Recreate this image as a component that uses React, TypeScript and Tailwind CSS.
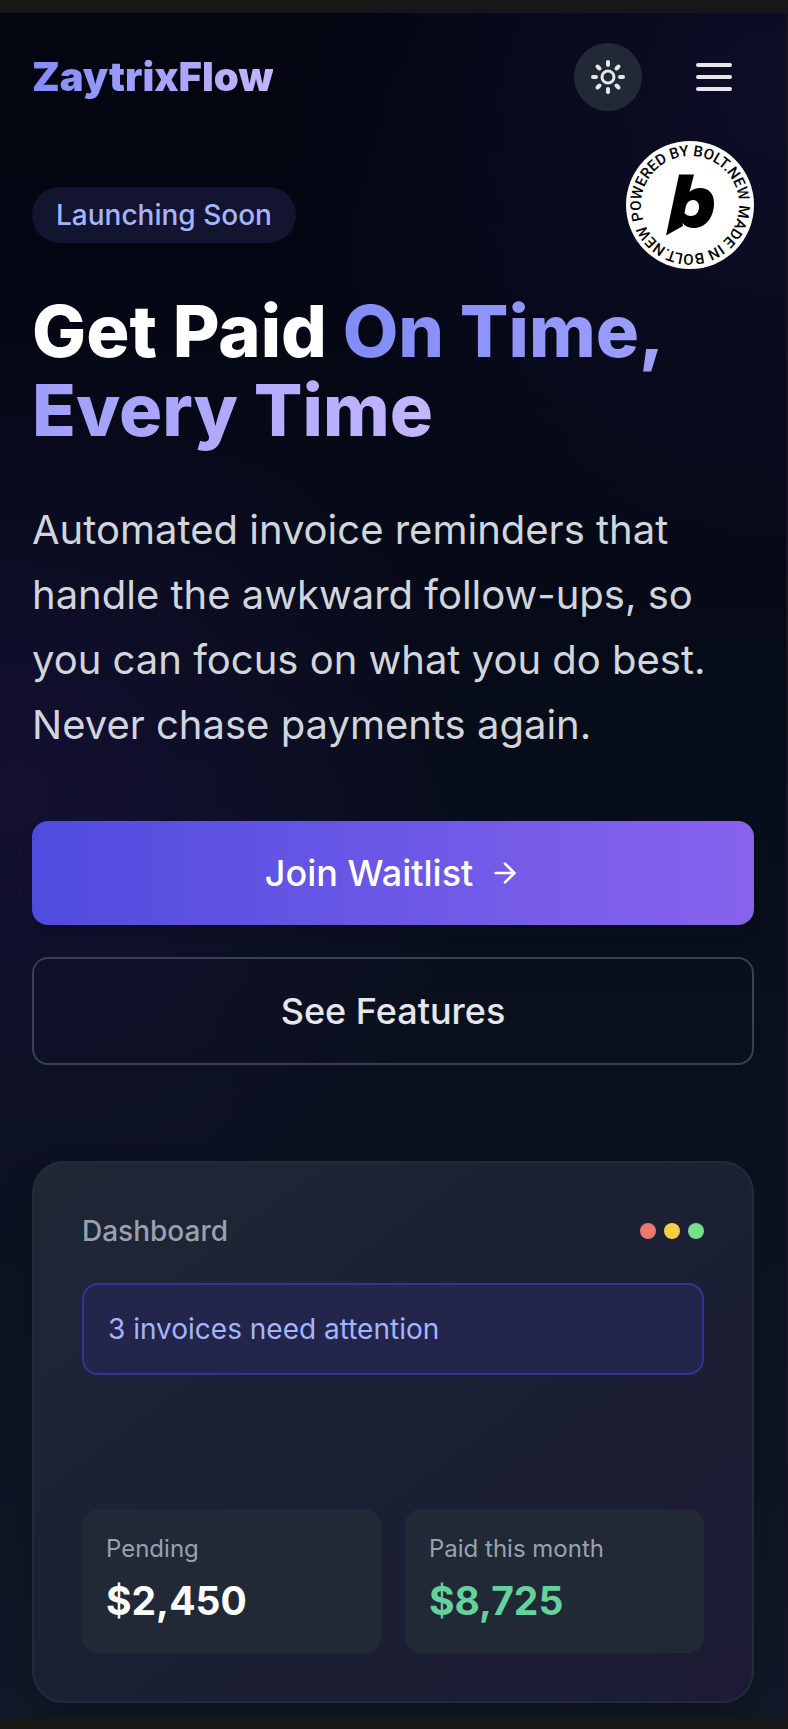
import React from 'react';
import { ArrowRight } from 'lucide-react';

const BoltBadge: React.FC = () => (
  <svg className="w-32 h-32" viewBox="0 0 128 128" role="img" aria-label="Powered by Bolt.new">
    <defs>
      <path id="badge-ring" d="M64 64 m-49 0 a49 49 0 1 1 98 0 a49 49 0 1 1 -98 0" />
    </defs>
    <circle cx="64" cy="64" r="64" fill="#fff" />
    <g transform="rotate(-18 64 64)">
      <text className="font-['Roboto',sans-serif] font-medium text-[15px]" fill="#000">
        <textPath href="#badge-ring">POWERED BY BOLT.NEW MADE IN BOLT.NEW</textPath>
      </text>
    </g>
    <path
      fillRule="evenodd"
      d="M53 33.5 H68 L63.500 51 C67 48 70 47 74 47 C83 47 88 53 88 62 C88 77 79 87 68 87 C63 87 59 85.500 56.500 82 L57 85 L40 94.500 Z M67 59 C62.500 59 60 63 59.500 67 L58.500 72 C60 74 62 75 65 75 C70 75 73 71 73 66 C73 62 71 59 67 59 Z"
      fill="#000"
    />
  </svg>
);

const App: React.FC = () => {
  const stats = [
    { label: "Pending", value: "$2,450", color: "text-white" },
    { label: "Paid this month", value: "$8,725", color: "text-[#63d39b]" }
  ];

  const dots = ["bg-[#eb7771]", "bg-[#f6ce46]", "bg-[#75df8c]"];

  return (
    <div className="bg-[#171717] pt-[13px] pb-3 pr-0.5 font-['Inter',sans-serif]">
      <div className="relative overflow-hidden bg-linear-to-b from-[#030510] to-[#111827] pb-3.5">
        <div className="absolute inset-0 bg-[radial-gradient(circle_at_100%_4%,#15153a90,transparent_500px),radial-gradient(circle_at_2%_46%,#1a1240a0,transparent_460px)]"></div>

        <div className="relative px-8">
          <header className="flex items-center justify-between pt-[30px]">
            <a href="#" className="text-[40px] leading-[56px] font-black bg-linear-to-r from-[#818cf8] to-[#c4b5fd] bg-clip-text text-transparent">
              ZaytrixFlow
            </a>
            <div className="flex items-center gap-8">
              <button aria-label="Toggle theme" className="w-[68px] h-[68px] rounded-full bg-[#212936] text-gray-200 flex items-center justify-center">
                <svg className="w-9 h-9" viewBox="0 0 36 36" fill="none" stroke="currentColor" strokeWidth="4" strokeLinecap="round">
                  <circle cx="18" cy="18" r="6" strokeWidth="3" />
                  <path d="M18 3v3M18 30v3M3 18h3M30 18h3M7.500 7.500l2 2M26.500 26.500l2 2M7.500 28.500l2-2M26.500 9.500l2-2" />
                </svg>
              </button>
              <button aria-label="Open menu" className="w-20 h-16 flex flex-col items-center justify-center gap-2">
                <span className="w-9 h-1 rounded-xs bg-gray-200"></span>
                <span className="w-9 h-1 rounded-xs bg-gray-200"></span>
                <span className="w-9 h-1 rounded-xs bg-gray-200"></span>
              </button>
            </div>
          </header>

          <div className="absolute right-8 top-32">
            <BoltBadge />
          </div>

          <main className="pt-[76px]">
            <span className="inline-block px-6 py-2 rounded-full bg-[#131430] text-[#a5b4fc] text-[28px] leading-10 font-medium">
              Launching Soon
            </span>

            <h1 className="mt-12 text-[72px] leading-[79px] font-extrabold text-white">
              Get Paid{' '}
              <span className="bg-linear-to-r from-[#818cf8] to-[#c4b5fd] bg-clip-text text-transparent">
                On Time, Every Time
              </span>
            </h1>

            <p className="mt-12 text-[40px] leading-[65px] text-gray-300">
              Automated invoice reminders that handle the awkward follow-ups, so you can focus on what you do best. Never chase payments again.
            </p>

            <div className="mt-16 flex flex-col gap-8">
              <button className="w-full h-[104px] rounded-2xl bg-linear-to-r from-[#4f4bdf] to-[#8763ed] text-white text-[36px] font-medium shadow-lg flex items-center justify-center gap-4">
                Join Waitlist
                <ArrowRight className="w-8 h-8" strokeWidth={2} />
              </button>
              <button className="w-full h-[108px] rounded-2xl border-2 border-[#374151] text-gray-200 text-[36px] font-medium">
                See Features
              </button>
            </div>

            <section className="mt-24 p-12 rounded-[32px] border-2 border-[#232b38] bg-linear-to-br from-[#1f2735] via-[#1b2033] to-[#1d1b35] shadow-2xl">
              <div className="flex items-center justify-between mb-8">
                <h2 className="text-[28px] leading-10 font-medium text-gray-400">Dashboard</h2>
                <div className="flex gap-2">
                  {dots.map((dot) => (
                    <span key={dot} className={`w-4 h-4 rounded-full ${dot}`}></span>
                  ))}
                </div>
              </div>

              <div className="p-6 rounded-2xl border-2 border-[#37329b] bg-[#23254b] text-[#a5b4fc] text-[28px] leading-10">
                3 invoices need attention
              </div>

              <div className="mt-[134px] grid grid-cols-2 gap-6">
                {stats.map((stat) => (
                  <div key={stat.label} className="p-6 rounded-2xl bg-[#212936]">
                    <div className="text-2xl text-gray-400 mb-2">{stat.label}</div>
                    <div className={`text-[39px] leading-[56px] font-bold ${stat.color}`}>{stat.value}</div>
                  </div>
                ))}
              </div>
            </section>
          </main>
        </div>
      </div>
    </div>
  );
};

export default App;
